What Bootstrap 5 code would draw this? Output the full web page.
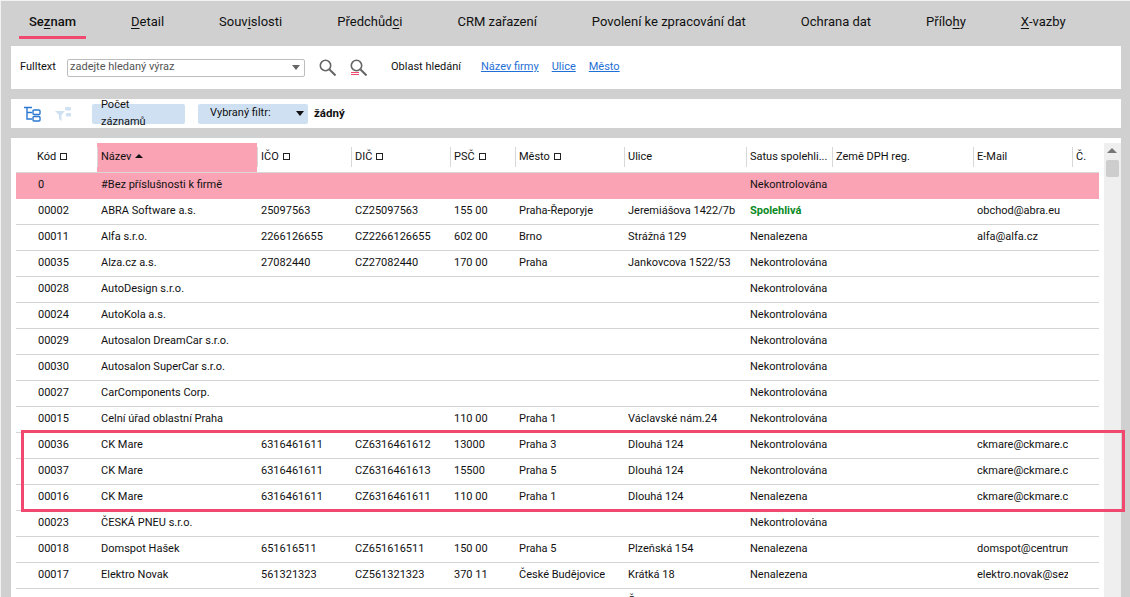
<!DOCTYPE html>
<html lang="cs">
<head>
    <meta charset="UTF-8">
    <meta name="viewport" content="width=device-width, initial-scale=1.0">
    <title>Seznam firem</title>
    <link href="https://cdn.jsdelivr.net/npm/bootstrap@5.3.0/dist/css/bootstrap.min.css" rel="stylesheet">
    <style>
        html, body { height: 100%; overflow: hidden; }
        body {
            background-color: #d0d0d0;
            box-shadow: inset 1px 1px 0 #f2f2f2;
            font-family: Roboto, "Liberation Sans", sans-serif;
            font-size: 11px;
            color: #111;
            position: relative;
        }
        .zalozky { height: 46px; padding-left: 19px; }
        .zalozka {
            font-size: 13px;
            color: #111;
            text-decoration: none;
            padding: 8px 10px 0;
            height: 39px;
            margin-right: 35px;
            display: flex;
            align-items: center;
            border-bottom: 3px solid transparent;
        }
        .zalozka.aktivni { border-bottom-color: #f0486e; font-weight: 500; }
        .zalozka u { text-underline-offset: 2px; }
        .panel-bily { background: #fff; margin: 0 9px 0 11px; }
        .panel-hledani { height: 43px; padding-left: 9px; margin-bottom: 10px; }
        .popisek-fulltext { width: 47px; }
        .hledani-pole {
            width: 238px; height: 18px; border: 1px solid #bdbdbd; border-radius: 2px;
            padding-left: 2px; color: #555;
        }
        .sipka-dolu { width: 0; height: 0; border-left: 4px solid transparent; border-right: 4px solid transparent; border-top: 5px solid #666; }
        .odkaz-oblast { color: #1f6fd6; }
        .panel-filtr { height: 29px; margin-bottom: 10px; padding-left: 13px; }
        .stitek-filtr { background: #cfe0f2; height: 20px; border-radius: 2px; padding: 0 9px; }
        .panel-tabulka { height: 459px; padding: 5px 0 0 5px; overflow: hidden; }
        .mrizka { table-layout: fixed; width: 1083px; border-collapse: collapse; }
        .mrizka th, .mrizka td { padding: 0 0 0 4px; white-space: nowrap; overflow: hidden; }
        .mrizka th { height: 29px; font-weight: 400; border-bottom: 1px solid #d8d8d8; position: relative; }
        .mrizka th + th::before { content: ""; position: absolute; left: 0; top: 4px; height: 20px; width: 1px; background: #d8d8d8; }
        .mrizka td { height: 26px; border-bottom: 1px solid #d4d4d4; padding-top: 1px; }
        .mrizka tr.radek-ruzovy td { background: #f9a3b4; border-bottom-color: #f9a3b4; }
        .mrizka th.razeno { background: #f9a3b4; }
        .mrizka td:first-child { padding-left: 22px; }
        .mrizka th:first-child { padding-left: 21px; }
        .bunka-text { display: block; overflow: hidden; margin-right: 4px; }
        .ctverecek { display: inline-block; width: 7px; height: 7px; border: 1px solid #222; margin-left: 4px; }
        .razeni-sipka { display: inline-block; width: 0; height: 0; border-left: 4px solid transparent; border-right: 4px solid transparent; border-bottom: 4px solid #111; margin-left: 4px; vertical-align: 2px; }
        .spolehlivy { color: #0a8a1e; font-weight: 700; }
        .posuvnik { width: 17px; background: #efefef; }
        .posuvnik-jezdec { width: 13px; height: 17px; background: #cdcdcd; border-radius: 2px; margin: 7px 2px 0; }
        .sipka-nahoru { width: 0; height: 0; border-left: 5px solid transparent; border-right: 5px solid transparent; border-bottom: 5px solid #777; margin: 5px 3px 0; }
        .ramecek-vyber { position: absolute; left: 21px; top: 430px; width: 1104px; height: 82px; border: 3px solid #f0486e; pointer-events: none; }
    </style>
</head>
<body>
<nav class="zalozky d-flex align-items-start">
    <a class="zalozka aktivni" href="#">Se<u>z</u>nam</a>
    <a class="zalozka" href="#"><u>D</u>etail</a>
    <a class="zalozka" href="#">Souv<u>i</u>slosti</a>
    <a class="zalozka" href="#">Předchůd<u>c</u>i</a>
    <a class="zalozka" href="#">CRM zařazení</a>
    <a class="zalozka" href="#">Povolení ke zpracování dat</a>
    <a class="zalozka" href="#">Ochrana dat</a>
    <a class="zalozka" href="#">Přílo<u>h</u>y</a>
    <a class="zalozka" href="#"><u>X</u>-vazby</a>
</nav>

<div class="panel-bily panel-hledani d-flex align-items-center">
    <span class="popisek-fulltext">Fulltext</span>
    <div class="hledani-pole d-flex align-items-center justify-content-between pe-1">
        <span>zadejte hledaný výraz</span><span class="sipka-dolu"></span>
    </div>
    <svg style="margin-left:14px" width="17" height="17" viewBox="0 0 17 17" fill="none" stroke="#666" stroke-width="1.6"><circle cx="6.5" cy="6.5" r="5.2"/><path d="M10.5 10.5l6 6" stroke-width="2"/></svg>
    <svg style="margin-left:14px" width="17" height="17" viewBox="0 0 17 17" fill="none" stroke="#666" stroke-width="1.6"><circle cx="6.5" cy="6.5" r="5.2"/><path d="M10.5 10.5l6 6" stroke-width="2"/><path d="M1 13.5h8M1 15.5h8" stroke="#f0486e" stroke-width="1"/></svg>
    <span style="margin-left:24px">Oblast hledání</span>
    <a class="odkaz-oblast" style="margin-left:20px" href="#">Název firmy</a>
    <a class="odkaz-oblast" style="margin-left:13px" href="#">Ulice</a>
    <a class="odkaz-oblast" style="margin-left:13px" href="#">Město</a>
</div>

<div class="panel-bily panel-filtr d-flex align-items-center">
    <svg width="17" height="16" viewBox="0 0 17 16" fill="none" stroke="#2a78d2" stroke-width="1.4"><path d="M0 1.5h8M3 1.5v11.5h5M3 6.5h5"/><rect x="9" y="4" width="7" height="4.5" rx="1"/><rect x="9" y="10.5" width="7" height="4.5" rx="1"/></svg>
    <svg style="margin-left:14px" width="17" height="16" viewBox="0 0 17 16" fill="#cfe0f2"><path d="M0 5h10L6.5 9v6L4 13V9z"/><rect x="10" y="1" width="6" height="3.5" rx="1"/><rect x="11" y="7" width="5" height="3.5" rx="1"/></svg>
    <span class="stitek-filtr d-flex align-items-center" style="margin-left:20px;width:93px">Počet záznamů</span>
    <span class="stitek-filtr d-flex align-items-center justify-content-between" style="margin-left:13px;width:110px;padding-left:12px;padding-right:4px">Vybraný filtr:<span class="sipka-dolu" style="border-top-color:#111"></span></span>
    <b style="font-size:11.5px;margin-left:6px">žádný</b>
</div>

<div class="panel-bily panel-tabulka d-flex">
    <table class="mrizka flex-shrink-0">
        <colgroup id="sloupce"></colgroup>
        <thead><tr id="hlavicka"></tr></thead>
        <tbody id="radky"></tbody>
    </table>
    <div class="posuvnik ms-auto flex-shrink-0 me-0">
        <div class="sipka-nahoru"></div>
        <div class="posuvnik-jezdec"></div>
    </div>
</div>

<div class="ramecek-vyber"></div>

<script>
    const sirky = [81, 160, 94, 99, 65, 109, 122, 86, 141, 99, 27];
    const hlavicka = [["Kód",1], ["Název",0], ["IČO",1], ["DIČ",1], ["PSČ",1], ["Město",1], ["Ulice",0], ["Satus spolehli...",0], ["Země DPH reg.",0], ["E-Mail",0], ["Č.",0]];
    const radky = [
        ["0","#Bez příslušnosti k firmě","","","","","","Nekontrolována","","",""],
        ["00002","ABRA Software a.s.","25097563","CZ25097563","155 00","Praha-Řeporyje","Jeremiášova 1422/7b","Spolehlivá","","obchod@abra.eu",""],
        ["00011","Alfa s.r.o.","2266126655","CZ2266126655","602 00","Brno","Strážná 129","Nenalezena","","alfa@alfa.cz",""],
        ["00035","Alza.cz a.s.","27082440","CZ27082440","170 00","Praha","Jankovcova 1522/53","Nekontrolována","","",""],
        ["00028","AutoDesign s.r.o.","","","","","","Nekontrolována","","",""],
        ["00024","AutoKola a.s.","","","","","","Nekontrolována","","",""],
        ["00029","Autosalon DreamCar s.r.o.","","","","","","Nekontrolována","","",""],
        ["00030","Autosalon SuperCar s.r.o.","","","","","","Nekontrolována","","",""],
        ["00027","CarComponents Corp.","","","","","","Nekontrolována","","",""],
        ["00015","Celní úřad oblastní Praha","","","110 00","Praha 1","Václavské nám.24","Nekontrolována","","",""],
        ["00036","CK Mare","6316461611","CZ6316461612","13000","Praha 3","Dlouhá 124","Nekontrolována","","ckmare@ckmare.cz",""],
        ["00037","CK Mare","6316461611","CZ6316461613","15500","Praha 5","Dlouhá 124","Nekontrolována","","ckmare@ckmare.cz",""],
        ["00016","CK Mare","6316461611","CZ6316461611","110 00","Praha 1","Dlouhá 124","Nenalezena","","ckmare@ckmare.cz",""],
        ["00023","ČESKÁ PNEU s.r.o.","","","","","","Nekontrolována","","",""],
        ["00018","Domspot Hašek","651616511","CZ651616511","150 00","Praha 5","Plzeňská 154","Nenalezena","","domspot@centrum.cz",""],
        ["00017","Elektro Novak","561321323","CZ561321323","370 11","České Budějovice","Krátká 18","Nenalezena","","elektro.novak@seznam.cz",""],
        ["","","","","","","Č","","","",""]
    ];

    document.getElementById("sloupce").innerHTML = sirky.map(s => `<col style="width:${s}px">`).join("");
    document.getElementById("hlavicka").innerHTML = hlavicka.map((h, i) => {
        const znak = h[1] ? '<span class="ctverecek"></span>' : (i === 1 ? '<span class="razeni-sipka"></span>' : '');
        return `<th class="${i === 1 ? 'razeno' : ''}">${h[0]}${znak}</th>`;
    }).join("");
    document.getElementById("radky").innerHTML = radky.map((r, i) => {
        const bunky = r.map((t, j) => `<td><span class="bunka-text">${t === "Spolehlivá" ? '<span class="spolehlivy">' + t + '</span>' : t}</span></td>`).join("");
        return `<tr class="${i === 0 ? 'radek-ruzovy' : ''}">${bunky}</tr>`;
    }).join("");
</script>
<script src="https://cdn.jsdelivr.net/npm/bootstrap@5.3.0/dist/js/bootstrap.bundle.min.js"></script>
</body>
</html>
